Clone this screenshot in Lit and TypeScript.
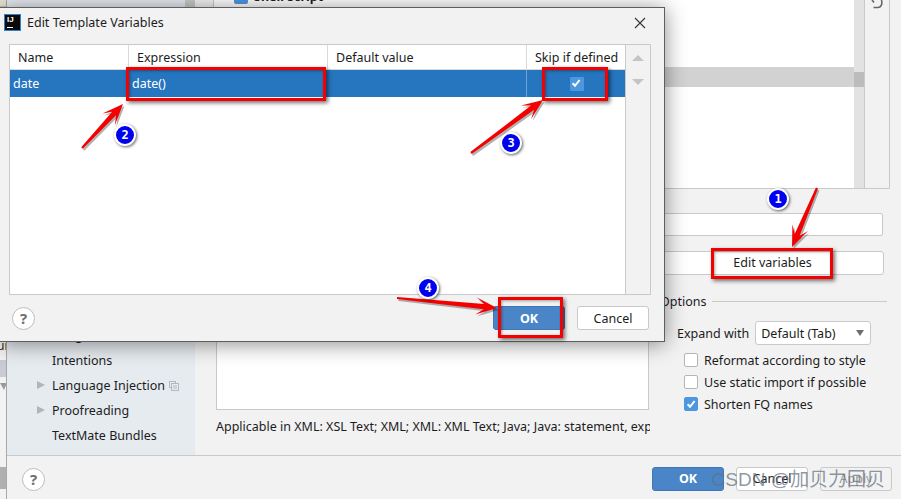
import { LitElement, html, css, svg } from "lit";
import { customElement } from "lit/decorators.js";

const sidebarRows: [string, boolean][] = [
  ["File Types", false],
  ["Android Layout Editor", false],
  ["Copyright", true],
  ["Inlay Hints", true],
  ["Duplicates", false],
  ["Emmet", true],
  ["Gutter Icons", false],
  ["Images", false],
  ["Intentions", false],
  ["Language Injections", true],
  ["Proofreading", true],
  ["TextMate Bundles", false],
];

const boxes = [
  { x: 711, y: 248, w: 122, h: 31 },
  { x: 126, y: 67, w: 200, h: 34 },
  { x: 542, y: 67, w: 66, h: 34 },
  { x: 498, y: 297, w: 65, h: 41 },
];
const badges = [
  { n: 1, x: 778, y: 199 },
  { n: 2, x: 125, y: 135 },
  { n: 3, x: 511, y: 143 },
  { n: 4, x: 428, y: 288 },
];
const arrows = [
  { x1: 817, y1: 188, x2: 792, y2: 247 },
  { x1: 82, y1: 148, x2: 123, y2: 104 },
  { x1: 471, y1: 153, x2: 543, y2: 100 },
  { x1: 397, y1: 298, x2: 497, y2: 308 },
];

function arrowPoints(a: { x1: number; y1: number; x2: number; y2: number }) {
  const dx = a.x2 - a.x1;
  const dy = a.y2 - a.y1;
  const len = Math.hypot(dx, dy);
  const ux = dx / len;
  const uy = dy / len;
  const nx = -uy;
  const ny = ux;
  const p = (along: number, side: number) =>
    `${(a.x1 + ux * along + nx * side).toFixed(1)},${(a.y1 + uy * along + ny * side).toFixed(1)}`;
  const neck = len - 13;
  const barb = len - 21;
  return [p(0, 1.1), p(neck, 2.6), p(barb, 8.5), p(len, 0), p(barb, -8.5), p(neck, -2.6), p(0, -1.1)].join(" ");
}

const helpIcon = html`<span class="help">?</span>`;

@customElement("app-root")
export class AppRoot extends LitElement {
  static styles = css`
    :host {
      display: block;
      width: 901px;
      height: 499px;
      overflow: hidden;
      position: relative;
      background: #f2f2f2;
      font-family: "Noto Sans", "Noto Sans CJK SC", sans-serif;
      font-size: 12.5px;
      color: #1c1c1c;
    }
    * { box-sizing: border-box; }
    .desk { display: flex; width: 901px; height: 499px; }
    .gutter {
      width: 7px;
      flex: none;
      border-right: 1px solid #a8a8a8;
      display: flex;
      flex-direction: column;
      background: #f2f2f2;
      overflow: hidden;
    }
    .g-top { height: 7px; background: #e8e4d4; border-bottom: 1px solid #c9c2a4; }
    .g-space { flex: 1; }
    .g-text { height: 16px; font-size: 12px; line-height: 16px; overflow: hidden; margin-left: -3px; white-space: nowrap; margin-bottom: 6px; }
    .g-blob { height: 17px; background: #c6ccd2; margin-bottom: 6px; }
    .g-tri { width: 0; height: 0; border-left: 4px solid transparent; border-right: 3px solid transparent; border-top: 7px solid #9a9a9a; margin-bottom: 77px; }
    .g-block { height: 22px; background: #b0b0b0; margin-bottom: 10px; }

    .settings { flex: 1; display: flex; flex-direction: column; min-width: 0; }
    .settings-body { flex: 1; min-height: 0; display: flex; }
    .sidebar {
      width: 178px;
      flex: none;
      background: #e6ebf0;
      display: flex;
      flex-direction: column;
      justify-content: flex-end;
      overflow: hidden;
      padding-bottom: 7px;
    }
    .side-row { height: 25px; flex: none; display: flex; align-items: center; padding-left: 30px; position: relative; line-height: 25px; }
    .side-row.arrow::before {
      content: "";
      position: absolute;
      left: 30px;
      top: 8px;
      border-left: 8px solid #b4b4b4;
      border-top: 4.5px solid transparent;
      border-bottom: 4.5px solid transparent;
    }
    .side-row span { margin-left: 15px; max-width: 113px; overflow: hidden; white-space: nowrap; }
    .side-row svg { margin-left: 4px; flex: none; }
    .side-scroll { width: 10px; flex: none; background: #e6ebf0; }
    .side-scroll div { height: 8px; background: #c9c9c9; }

    .main { flex: 1; min-width: 0; padding-left: 18px; padding-right: 11px; display: flex; flex-direction: column; }
    .list-frame {
      height: 189px;
      flex: none;
      display: flex;
      border: 1px solid #c9c9c9;
      border-top: none;
    }
    .list { flex: 1; background: #fff; position: relative; overflow: hidden; min-width: 0; }
    .list-rows { margin-top: -13px; }
    .l-row { height: 20px; display: flex; align-items: center; padding-left: 20px; gap: 6px; font-weight: 700; line-height: 20px; }
    .l-row.sel { background: #d2d2d2; margin-top: 60px; }
    .l-check { width: 14px; height: 14px; background: #4d97e0; border-radius: 2px; }
    .track { position: absolute; right: 0; top: 0; bottom: 0; width: 10px; background: #e2e2e2; }
    .thumb { position: absolute; right: 0; top: 72px; height: 15px; width: 10px; background: #bcbcbc; }
    .tools { width: 25px; flex: none; border-left: 1px solid #c9c9c9; display: flex; justify-content: center; align-items: flex-start; }
    .fields { display: flex; flex-direction: column; margin-top: 24px; gap: 15px; }
    .field { height: 23px; background: #fff; border: 1px solid #c9c9c9; border-radius: 2px; margin-right: 7px; margin-left: 430px; }
    .edit-btn {
      height: 24px;
      margin-left: 430px;
      margin-right: 6px;
      background: #fff;
      border: 1px solid #c9c9c9;
      border-radius: 3px;
      text-align: center;
      line-height: 22px;
      padding-left: 18px;
    }
    .lower { flex: 1; min-height: 0; display: grid; grid-template-columns: 436px 1fr; column-gap: 8px; margin-top: -25px; margin-left: 3px; }
    .template { display: flex; flex-direction: column; }
    .t-area { height: 135px; margin-top: 25px; background: #fff; border: 1px solid #c9c9c9; flex: none; width: 433px; }
    .t-note { width: 434px; overflow: hidden; white-space: nowrap; margin-top: 8px; line-height: 18px; }
    .options { padding-top: 25px; }
    .opt-head { display: flex; align-items: center; gap: 6px; height: 18px; margin-top: 17px; margin-right: 3px; }
    .opt-head i { flex: 1; height: 1px; background: #c9c9c9; }
    .expand { display: flex; align-items: center; gap: 6px; margin: 11px 0 0 17px; height: 24px; }
    .select {
      width: 116px;
      height: 24px;
      background: #fff;
      border: 1px solid #c9c9c9;
      border-radius: 3px;
      display: flex;
      align-items: center;
      justify-content: space-between;
      padding: 0 6px 0 5px;
    }
    .select::after { content: ""; border-top: 6px solid #6e6e6e; border-left: 4.5px solid transparent; border-right: 4.5px solid transparent; }
    .opts { display: flex; flex-direction: column; gap: 8px; margin: 8px 0 0 24px; }
    .opt { display: flex; align-items: center; gap: 6px; height: 14px; white-space: nowrap; }
    .box { width: 14px; height: 14px; flex: none; background: #fff; border: 1px solid #b5b5b5; border-radius: 2px; display: flex; }
    .box.on { background: #4d97e0; border-color: #4d97e0; }
    .footer {
      height: 44px;
      flex: none;
      border-top: 1px solid #c9c9c9;
      display: flex;
      align-items: center;
      padding: 3px 9px 0 15px;
    }
    .help {
      width: 23px;
      height: 23px;
      flex: none;
      border-radius: 50%;
      background: #fff;
      border: 1px solid #bdbdbd;
      color: #6e6e6e;
      font-weight: 700;
      font-size: 15px;
      line-height: 21px;
      text-align: center;
    }
    .grow { flex: 1; }
    .btn {
      width: 72px;
      height: 24px;
      border-radius: 3px;
      background: #fff;
      border: 1px solid #c9c9c9;
      text-align: center;
      line-height: 22px;
      flex: none;
    }
    .btn.primary { background: #4a86c7; border-color: #3f78b4; color: #fff; font-weight: 700; }
    .btn.off { background: #f2f2f2; color: #9a9a9a; }
    .btns { display: flex; gap: 12px; }

    .dialog {
      position: absolute;
      left: 0;
      top: 7px;
      width: 665px;
      height: 335px;
      background: #f2f2f2;
      border: 1px solid #5e5e5e;
      border-left: none;
      box-shadow: 0 2px 20px rgba(0, 0, 0, 0.45);
      display: flex;
      flex-direction: column;
    }
    .d-title { height: 29px; flex: none; display: flex; align-items: center; padding: 0 18px 0 5px; gap: 7px; }
    .ij {
      width: 15px;
      height: 15px;
      background: #0a0a0a;
      outline: 1px solid #2f7fd0;
      color: #fff;
      font-size: 8px;
      font-weight: 700;
      line-height: 9px;
      padding-left: 2px;
      position: relative;
      font-family: "Liberation Sans", sans-serif;
    }
    .ij::after { content: ""; position: absolute; left: 2px; bottom: 2px; width: 6px; height: 1px; background: #fff; }
    .d-name { flex: 1; }
    .d-table {
      height: 251px;
      margin: 7px 13px 0 9px;
      border: 1px solid #c9c9c9;
      display: flex;
      flex: none;
    }
    .t-main { flex: 1; background: #fff; border-right: 1px solid #c9c9c9; min-width: 0; }
    .t-tools { width: 24px; flex: none; display: flex; flex-direction: column; align-items: center; padding-top: 10px; gap: 18px; }
    .t-tools i { border-left: 6px solid transparent; border-right: 6px solid transparent; }
    .t-tools i.up { border-bottom: 6px solid #c4c4c4; }
    .t-tools i.down { border-top: 6px solid #c4c4c4; }
    .t-row { display: grid; grid-template-columns: 119px 199px 199px 1fr; }
    .t-head { height: 25px; border-bottom: 1px solid #d9d9d9; }
    .t-head div { padding-left: 8px; line-height: 25px; border-right: 1px solid #d9d9d9; white-space: nowrap; overflow: hidden; }
    .t-head div:last-child { border-right: none; }
    .t-sel { height: 27px; background: #2675bf; color: #fff; line-height: 27px; }
    .t-sel div { padding-left: 3px; border-right: 1px solid #6fa3d6; }
    .t-sel div:first-child { border-right: none; }
    .t-sel div:nth-child(2) { border-right: none; }
    .t-sel div:last-child { border-right: none; display: flex; align-items: center; padding-left: 43px; }
    .t-box { width: 14px; height: 14px; background: #4d97e0; border-radius: 1px; display: flex; }
    .d-foot { flex: 1; display: flex; align-items: center; padding: 0 15px 0 12px; }
    .d-foot .btn { line-height: 24px; }

    .ann { position: absolute; inset: 0; pointer-events: none; }
    .ann svg { position: absolute; left: 0; top: 0; }
    .red { position: absolute; border: 3px solid #f50000; box-shadow: 2px 2px 4px rgba(0, 0, 0, 0.55), inset 1px 1px 3px rgba(0, 0, 0, 0.35); }
    .badge {
      position: absolute;
      width: 22px;
      height: 22px;
      margin: -11px 0 0 -11px;
      border-radius: 50%;
      background: #0000f0;
      border: 2px solid #fff;
      box-shadow: 1px 1px 3px rgba(0, 0, 0, 0.6);
      color: #fff;
      font-family: "DejaVu Sans Mono", monospace;
      font-weight: 700;
      font-size: 12px;
      line-height: 18px;
      text-align: center;
    }
    .mark {
      position: absolute;
      right: 16px;
      bottom: 5px;
      font-size: 19px;
      line-height: 28px;
      color: rgba(100, 112, 128, 0.72);
      white-space: nowrap;
      font-family: "Liberation Sans", "Noto Sans CJK SC", sans-serif;
    }
  `;

  render() {
    const check = html`<svg width="12" height="12" viewBox="0 0 12 12"><path d="M2.6 6.2 5 8.8 9.600 3" fill="none" stroke="#fff" stroke-width="2"/></svg>`;
    return html`
      <div class="desk">
        <div class="gutter">
          <div class="g-top"></div>
          <div class="g-space"></div>
          <div class="g-text">ur</div>
          <div class="g-blob"></div>
          <div class="g-tri"></div>
          <div class="g-block"></div>
        </div>
        <div class="settings">
          <div class="settings-body">
            <div class="sidebar">
              ${sidebarRows.map(
                ([t, arrow]) => html`<div class="side-row ${arrow ? "arrow" : ""}">
                  <span>${t}</span>
                  ${t === "Language Injections"
                    ? html`<svg width="10" height="10" viewBox="0 0 10 10" fill="none" stroke="#b0b8c0"><rect x="0.5" y="0.5" width="6" height="6"/><rect x="2.5" y="2.5" width="7" height="7" fill="#e6ebf0"/><path d="M4 5h4M4 7h4"/></svg>`
                    : ""}
                </div>`
              )}
            </div>
            <div class="side-scroll"><div></div></div>
            <div class="main">
              <div class="list-frame">
                <div class="list">
                  <div class="list-rows">
                    <div class="l-row"><span class="l-check"></span>Shell Script</div>
                    <div class="l-row sel"></div>
                  </div>
                  <div class="track"></div>
                  <div class="thumb"></div>
                </div>
                <div class="tools">
                  <svg width="14" height="9" viewBox="0 0 14 9" fill="none" stroke="#666" stroke-width="1.6"><path d="M2 0 4 2.500M3.500 7.500H8C11 7.500 12.500 4.500 11.500 0"/></svg>
                </div>
              </div>
              <div class="fields">
                <div class="field"></div>
                <div class="edit-btn">Edit variables</div>
              </div>
              <div class="lower">
                <div class="template">
                  <div class="t-area"></div>
                  <div class="t-note">Applicable in XML: XSL Text; XML; XML: XML Text; Java; Java: statement, expression</div>
                </div>
                <div class="options">
                  <div class="opt-head"><span>Options</span><i></i></div>
                  <div class="expand"><span>Expand with</span><div class="select">Default (Tab)</div></div>
                  <div class="opts">
                    <div class="opt"><span class="box"></span>Reformat according to style</div>
                    <div class="opt"><span class="box"></span>Use static import if possible</div>
                    <div class="opt"><span class="box on">${check}</span>Shorten FQ names</div>
                  </div>
                </div>
              </div>
            </div>
          </div>
          <div class="footer">
            ${helpIcon}
            <div class="grow"></div>
            <div class="btns">
              <div class="btn primary">OK</div>
              <div class="btn">Cancel</div>
              <div class="btn off">Apply</div>
            </div>
          </div>
        </div>
      </div>

      <div class="dialog">
        <div class="d-title">
          <div class="ij">IJ</div>
          <div class="d-name">Edit Template Variables</div>
          <svg width="12" height="12" viewBox="0 0 12 12" stroke="#333" stroke-width="1.1"><path d="M1 1 11 11M11 1 1 11"/></svg>
        </div>
        <div class="d-table">
          <div class="t-main">
            <div class="t-row t-head">
              <div>Name</div><div>Expression</div><div>Default value</div><div>Skip if defined</div>
            </div>
            <div class="t-row t-sel">
              <div>date</div><div>date()</div><div></div>
              <div><span class="t-box">${check}</span></div>
            </div>
          </div>
          <div class="t-tools"><i class="up"></i><i class="down"></i></div>
        </div>
        <div class="d-foot">
          ${helpIcon}
          <div class="grow"></div>
          <div class="btns">
            <div class="btn primary">OK</div>
            <div class="btn">Cancel</div>
          </div>
        </div>
      </div>

      <div class="ann">
        ${boxes.map(
          (b) => html`<div class="red" style="left:${b.x}px;top:${b.y}px;width:${b.w}px;height:${b.h}px"></div>`
        )}
        <svg width="901" height="499" viewBox="0 0 901 499">
          ${arrows.map(
            (a) => svg`<polygon points=${arrowPoints(a)} fill="#000" opacity="0.3" transform="translate(1.500 2)"/>
              <polygon points=${arrowPoints(a)} fill="#f40000"/>`
          )}
        </svg>
        ${badges.map(
          (b) => html`<div class="badge" style="left:${b.x}px;top:${b.y}px">${b.n}</div>`
        )}
        <div class="mark">CSDN @加贝力回贝</div>
      </div>
    `;
  }
}
